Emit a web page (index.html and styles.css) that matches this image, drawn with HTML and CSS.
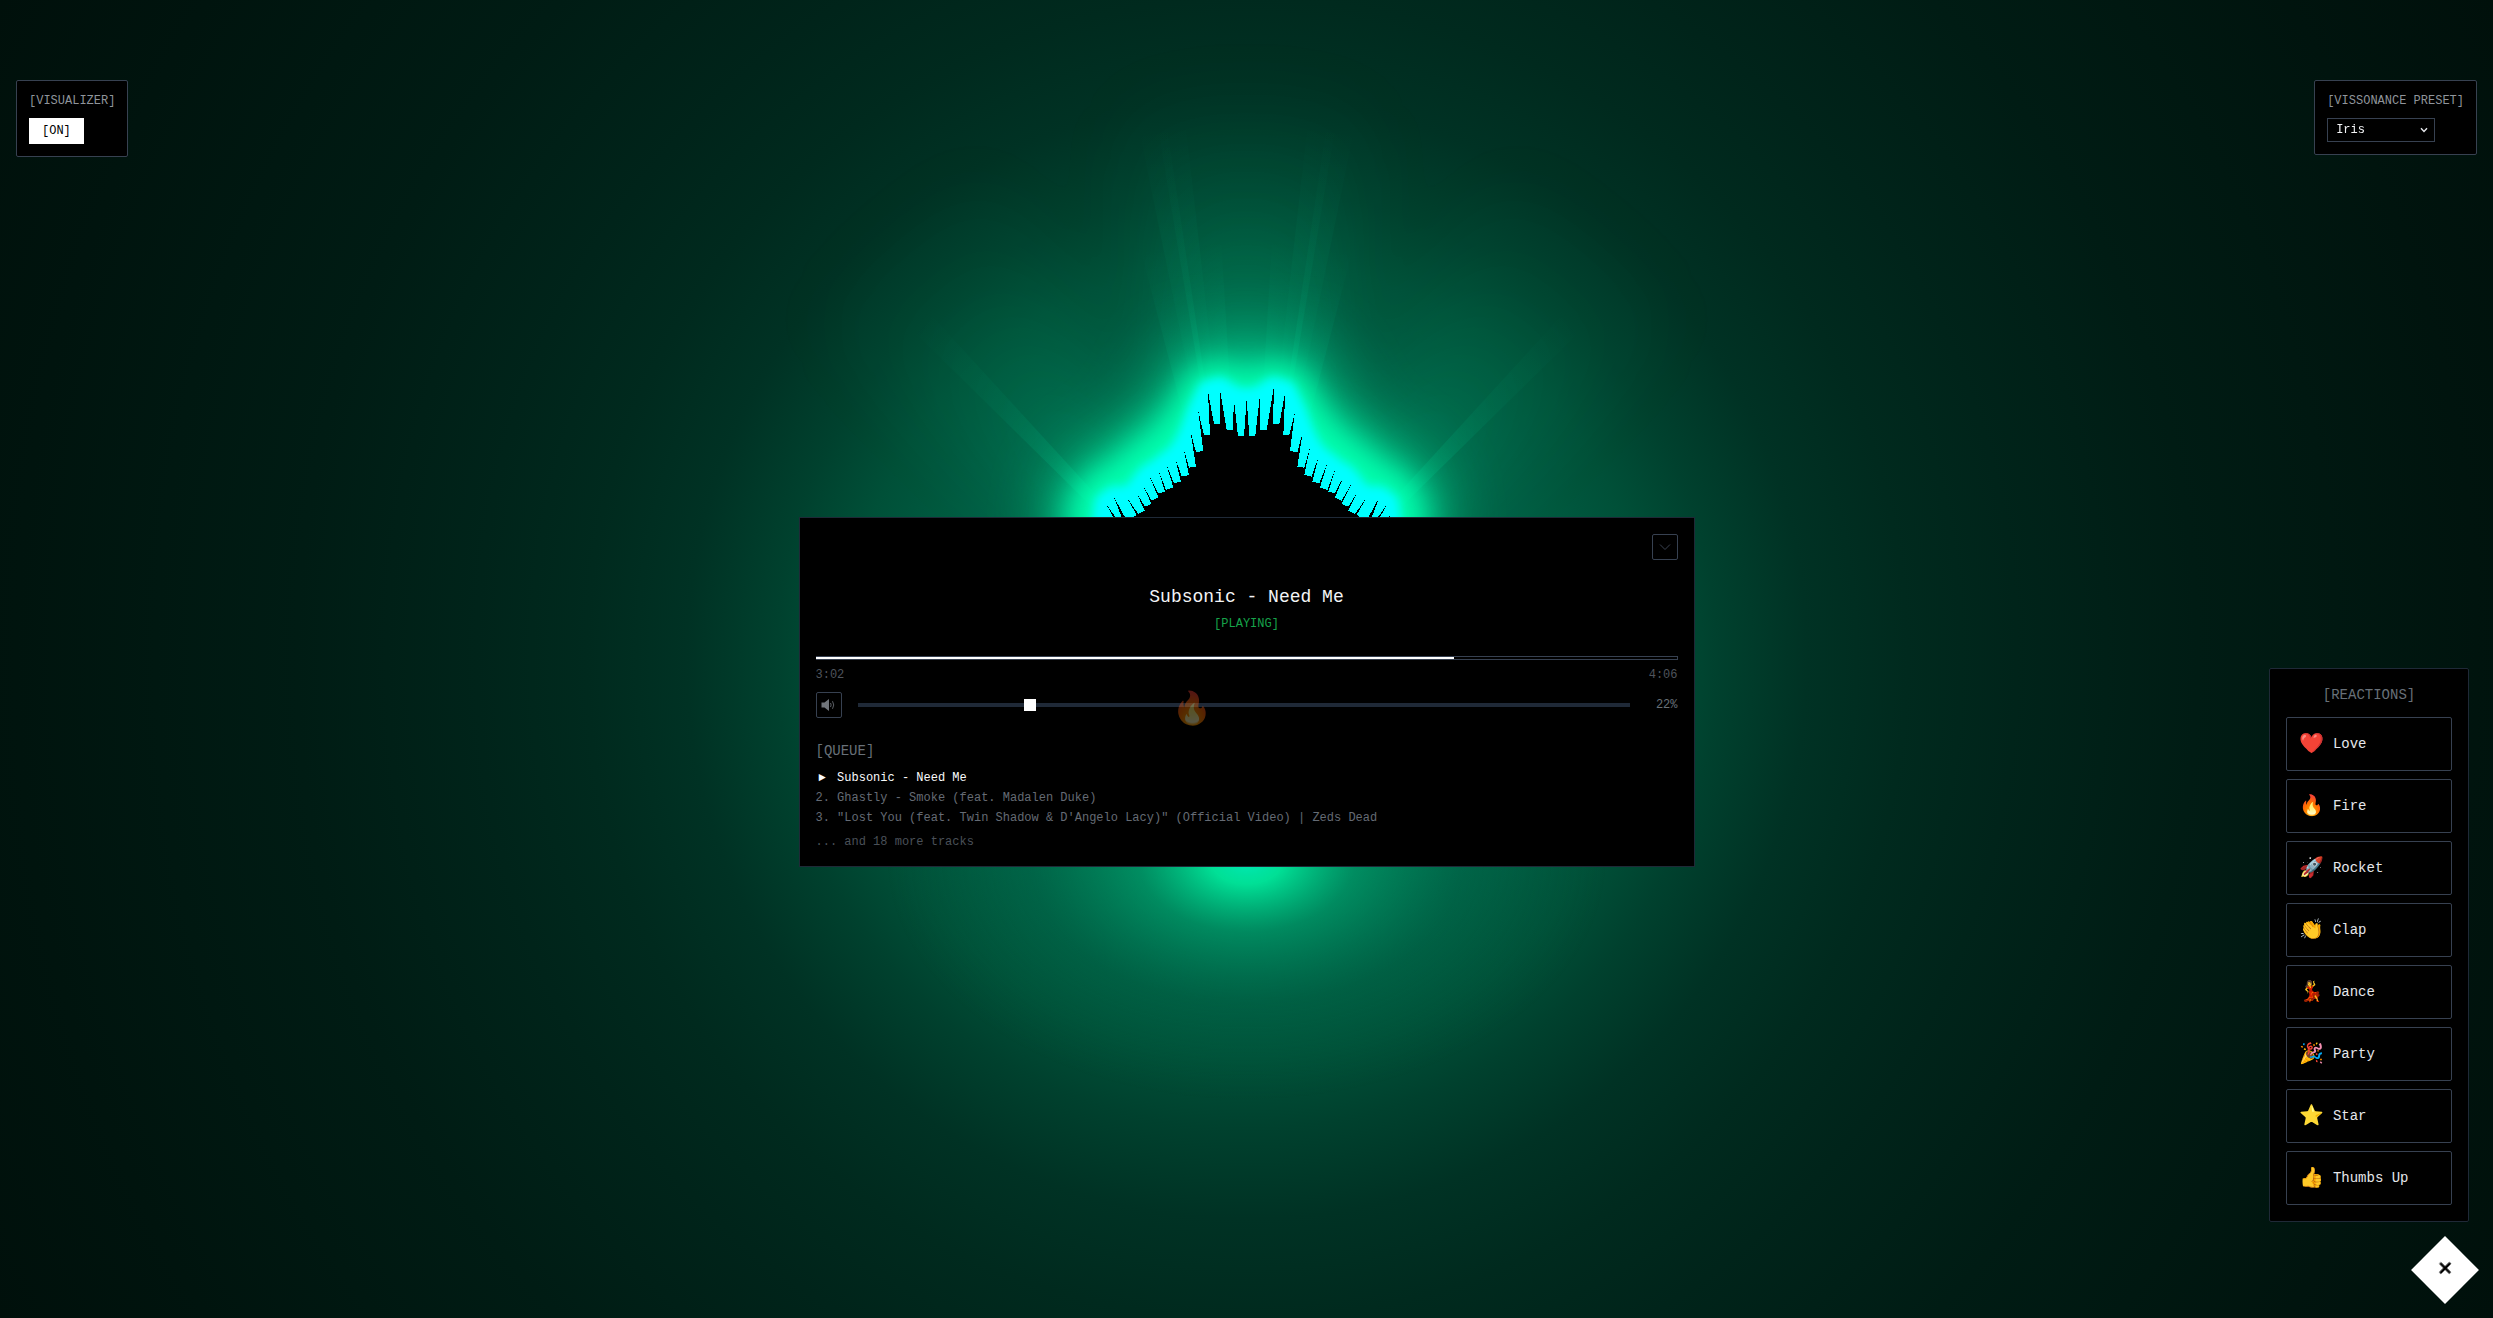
FILE: index.html
```html
<!DOCTYPE html>
<html lang="en">
<head>
<meta charset="utf-8">
<title>Player</title>
<link rel="stylesheet" href="styles.css">
</head>
<body>
<svg class="viz" viewBox="0 0 2493 1318" width="2493" height="1318" aria-hidden="true">
  <defs>
    <radialGradient id="fan" gradientUnits="userSpaceOnUse" cx="1246.67" cy="659" r="580">
      <stop offset="0.4" stop-color="#00ffb0" stop-opacity=".3"/>
      <stop offset="0.7" stop-color="#00ffb0" stop-opacity=".1"/>
      <stop offset="1" stop-color="#00ffb0" stop-opacity="0"/>
    </radialGradient>
    <radialGradient id="rayLong" gradientUnits="userSpaceOnUse" cx="1246.67" cy="659" r="540">
      <stop offset="0.42" stop-color="#00ffb0" stop-opacity=".13"/>
      <stop offset="0.7" stop-color="#00ffb0" stop-opacity=".045"/>
      <stop offset="1" stop-color="#00ffb0" stop-opacity="0"/>
    </radialGradient>
    <radialGradient id="rayMid" gradientUnits="userSpaceOnUse" cx="1246.67" cy="659" r="420">
      <stop offset="0.5" stop-color="#00ffb0" stop-opacity=".12"/>
      <stop offset="1" stop-color="#00ffb0" stop-opacity="0"/>
    </radialGradient>
    <radialGradient id="rayDiag" gradientUnits="userSpaceOnUse" cx="1246.67" cy="659" r="470">
      <stop offset="0.45" stop-color="#00ffb0" stop-opacity=".16"/>
      <stop offset="0.75" stop-color="#00ffb0" stop-opacity=".04"/>
      <stop offset="1" stop-color="#00ffb0" stop-opacity="0"/>
    </radialGradient>
    <radialGradient id="bottomGlow" gradientUnits="userSpaceOnUse" cx="1246.67" cy="860" r="240" gradientTransform="translate(1246.67 860) scale(1.5 1) translate(-1246.67 -860)">
      <stop offset="0" stop-color="#00e8b4" stop-opacity="1"/>
      <stop offset="0.1" stop-color="#00e69a" stop-opacity=".95"/>
      <stop offset="0.3" stop-color="#00b078" stop-opacity=".5"/>
      <stop offset="0.6" stop-color="#007a55" stop-opacity=".22"/>
      <stop offset="1" stop-color="#00704c" stop-opacity="0"/>
    </radialGradient>
    <filter id="b60" filterUnits="userSpaceOnUse" x="300" y="0" width="1900" height="1000"><feGaussianBlur stdDeviation="40"/></filter>
    <filter id="b40" filterUnits="userSpaceOnUse" x="600" y="0" width="1300" height="1000"><feGaussianBlur stdDeviation="34"/></filter>
    <filter id="b22" filterUnits="userSpaceOnUse" x="600" y="0" width="1300" height="1000"><feGaussianBlur stdDeviation="20"/></filter>
    <filter id="b14" filterUnits="userSpaceOnUse" x="600" y="0" width="1300" height="1000"><feGaussianBlur stdDeviation="14"/></filter>
    <filter id="b4" filterUnits="userSpaceOnUse" x="600" y="0" width="1300" height="1000"><feGaussianBlur stdDeviation="5"/></filter>
    <polygon id="fanShape" points="1246.67,659 1115,79 1378,79" fill="url(#fan)"/>
    <polygon id="rayL" points="1246.67,659 1232,89 1261.3,89" fill="url(#rayLong)"/>
    <polygon id="rayM" points="1246.67,659 1235,219 1258.3,219" fill="url(#rayMid)"/>
    <polygon id="rayD" points="1246.67,659 1232,89 1261.3,89" fill="url(#rayDiag)"/>
    <path id="contour" stroke-linejoin="round" d="M0 178 39 172 81 145 116 155 145 215 168 277 190 322 215 352 242 370 265 390 293 405 315 430 332 457 360 472 398 472 423 490 432 560 -432 560 -423 490 -398 472 -360 472 -332 457 -315 430 -293 405 -265 390 -242 370 -215 352 -190 322 -168 277 -145 215 -116 155 -81 145 -39 172Z"/>
    <polygon id="half" points="0,178 8,288 26,288 39,172 40,270 60,270 81,145 80,252 98,252 116,155 110,285 128,285 145,215 130,333 152,337 168,277 152,380 173,383 190,322 173,405 195,410 215,352 197,425 218,430 242,370 220,442 242,450 265,390 245,455 265,460 293,405 265,472 285,482 315,430 285,492 305,500 332,457 305,512 325,522 360,472 330,525 342,532 365,532 398,472 372,540 388,540 423,490 395,540 425,540 428,525 432,540 0,540"/>
  </defs>
  <g filter="url(#b60)">
    <use href="#fanShape"/>
    <g transform="rotate(-40 1246.67 659)"><use href="#fanShape" opacity=".45"/></g>
    <g transform="rotate(40 1246.67 659)"><use href="#fanShape" opacity=".45"/></g>
  </g>
  <g transform="rotate(-10 1246.67 659)"><use href="#rayL"/></g>
  <g transform="rotate(10 1246.67 659)"><use href="#rayL"/></g>
  <g transform="rotate(-8 1246.67 659)"><use href="#rayL"/></g>
  <g transform="rotate(8 1246.67 659)"><use href="#rayL"/></g>
  <g transform="rotate(-5 1246.67 659)"><use href="#rayM"/></g>
  <g transform="rotate(5 1246.67 659)"><use href="#rayM"/></g>
  <g transform="rotate(-13 1246.67 659)"><use href="#rayM"/></g>
  <g transform="rotate(13 1246.67 659)"><use href="#rayM"/></g>
  <g transform="rotate(-44 1246.67 659)"><use href="#rayD"/></g>
  <g transform="rotate(44 1246.67 659)"><use href="#rayD"/></g>
  <ellipse cx="1246.67" cy="860" rx="360" ry="240" fill="url(#bottomGlow)"/>
  <g filter="url(#b40)"><use href="#contour" transform="translate(1246.67 340) scale(.3333)" fill="#00e8a0" stroke="#00e8a0" stroke-width="240" opacity=".8"/></g>
  <g filter="url(#b22)">
    <g transform="translate(1246.67 340) scale(.3333)" fill="none" stroke="#00ffae" stroke-width="220" stroke-linecap="round" opacity=".85">
      <path d="M200 340 430 530"/>
      <path d="M-200 340 -430 530"/>
    </g>
  </g>
  <g filter="url(#b14)"><use href="#contour" transform="translate(1246.67 340) scale(.3333)" fill="#00ffae" stroke="#00ffae" stroke-width="150"/></g>
  <g filter="url(#b4)"><use href="#contour" transform="translate(1246.67 340) scale(.3333)" fill="#00ffff" stroke="#00ffff" stroke-width="66"/></g>
  <g transform="translate(1246.67 340) scale(.3333)" shape-rendering="crispEdges" fill="#000">
    <use href="#half"/>
    <use href="#half" transform="scale(-1 1)"/>
  </g>
</svg>

<div class="stage">
  <main class="player">
    <div class="player-top">
      <button class="icon-btn" type="button" aria-label="Collapse">
        <svg width="12" height="8" viewBox="0 0 12 8"><path d="M1 1.5 6 6.5 11 1.5" fill="none" stroke="#3b4352" stroke-width="1"/></svg>
      </button>
    </div>
    <h1 class="title">Subsonic - Need Me</h1>
    <p class="status">[PLAYING]</p>
    <div class="progress"><div class="progress-fill" style="width:74.2%"></div></div>
    <div class="times"><span>3:02</span><span>4:06</span></div>
    <div class="volume">
      <button class="icon-btn mute" type="button" aria-label="Mute">
        <svg width="15" height="14" viewBox="0 0 15 14"><path d="M0.5 4.5H3.5L8 1V13L3.5 9.5H0.5Z" fill="#71757b"/><path d="M9.5 5Q10.8 7 9.5 9M11.5 3.2Q14 7 11.5 10.8" fill="none" stroke="#5c6066" stroke-width="1"/></svg>
      </button>
      <div class="slider"><div class="thumb" style="left:22.4%"></div></div>
      <span class="pct">22%</span>
    </div>
    <h2 class="queue-title">[QUEUE]</h2>
    <ol class="queue">
      <li class="current"><span class="arrow">►</span>Subsonic - Need Me</li>
      <li>2. Ghastly - Smoke (feat. Madalen Duke)</li>
      <li>3. "Lost You (feat. Twin Shadow &amp; D'Angelo Lacy)" (Official Video) | Zeds Dead</li>
    </ol>
    <p class="more">... and 18 more tracks</p>
  </main>
</div>

<span class="float-emoji">🔥</span>

<aside class="box box-left">
  <div class="box-label">[VISUALIZER]</div>
  <button class="toggle" type="button">[ON]</button>
</aside>

<aside class="box box-right">
  <div class="box-label">[VISSONANCE PRESET]</div>
  <div class="select-wrap">
    <select class="preset"><option>Iris</option><option>Pulse</option><option>Bloom</option></select>
    <svg class="select-chevron" width="8" height="6" viewBox="0 0 8 6"><path d="M1 1.2 4 4.4 7 1.2" fill="none" stroke="#e5e7eb" stroke-width="1.4"/></svg>
  </div>
</aside>

<aside class="reactions">
  <h2 class="reactions-title">[REACTIONS]</h2>
  <div class="reaction-list">
    <button class="reaction" type="button"><span class="emoji">❤️</span><span>Love</span></button>
    <button class="reaction" type="button"><span class="emoji">🔥</span><span>Fire</span></button>
    <button class="reaction" type="button"><span class="emoji">🚀</span><span>Rocket</span></button>
    <button class="reaction" type="button"><span class="emoji">👏</span><span>Clap</span></button>
    <button class="reaction" type="button"><span class="emoji">💃</span><span>Dance</span></button>
    <button class="reaction" type="button"><span class="emoji">🎉</span><span>Party</span></button>
    <button class="reaction" type="button"><span class="emoji">⭐</span><span>Star</span></button>
    <button class="reaction" type="button"><span class="emoji">👍</span><span>Thumbs Up</span></button>
  </div>
</aside>

<button class="diamond" type="button" aria-label="Close"><span class="diamond-x">×</span></button>
</body>
</html>
```
FILE: styles.css
```css
* { box-sizing: border-box; }
html, body { margin: 0; height: 100%; }
body {
  overflow: hidden;
  font-family: "Liberation Mono", "Noto Color Emoji", monospace;
  color: #fff;
  background: radial-gradient(circle 1410px at 1246.67px 659px,
    #006e4c 0, #006e4c 220px, #005f44 300px, #005038 400px, #00412e 470px,
    #003224 560px, #002a1e 660px, #00241a 770px, #001c14 950px, #00140e 1230px, #00100b 100%);
}
button { font-family: inherit; cursor: pointer; }

.viz { position: fixed; left: 0; top: 0; display: block; }

.stage { position: relative; padding-top: 517px; }

.player {
  width: 896px;
  margin: 0 auto;
  height: 350px;
  padding: 16px;
  background: #000;
  border: 1px solid #1f2937;
}
.player-top { display: flex; justify-content: flex-end; }
.icon-btn {
  width: 26px;
  height: 26px;
  padding: 0;
  display: flex;
  align-items: center;
  justify-content: center;
  background: #000;
  border: 1px solid #374151;
  border-radius: 2px;
}

.title {
  margin: 23px 0 0;
  text-align: center;
  font-size: 18px;
  line-height: 28px;
  font-weight: 400;
  color: #f3f4f6;
}
.status {
  margin: 5px 0 0;
  text-align: center;
  font-size: 12px;
  line-height: 16px;
  color: #16a34a;
}
.progress {
  position: relative;
  margin-top: 24px;
  height: 4px;
  border: 1px solid #374151;
  background: #000;
}
.progress-fill { position: absolute; left: -1px; top: 0; height: 2px; background: #fff; }
.times {
  display: flex;
  justify-content: space-between;
  margin-top: 7px;
  font-size: 12px;
  line-height: 16px;
  color: #4f545c;
}
.volume { display: flex; align-items: center; gap: 16px; margin-top: 9px; }
.slider { position: relative; flex: 1; height: 4px; background: #1f2937; }
.thumb {
  position: absolute;
  top: -4px;
  width: 12px;
  height: 12px;
  margin-left: -6px;
  background: #fff;
}
.pct { width: 32px; text-align: right; font-size: 12px; line-height: 16px; color: #687078; }

.queue-title {
  margin: 23px 0 9px;
  font-size: 14px;
  line-height: 20px;
  font-weight: 400;
  color: #687078;
}
.queue {
  list-style: none;
  margin: 0;
  padding: 0;
  display: flex;
  flex-direction: column;
  gap: 4px;
  font-size: 12px;
  line-height: 16px;
  color: #656b74;
}
.current { color: #f9fafb; }
.arrow { display: inline-block; width: 21.6px; padding-left: 3px; }
.more { margin: 8px 0 0; font-size: 12px; line-height: 16px; color: #4a5058; }

.float-emoji {
  position: absolute;
  left: 1172px;
  top: 692px;
  font-size: 32px;
  line-height: 37px;
  opacity: .34;
}

.box {
  position: absolute;
  top: 80px;
  padding: 12px;
  background: #000;
  border: 1px solid #374151;
  border-radius: 2px;
}
.box-left { left: 16px; }
.box-right { right: 16px; }
.box-label { margin-bottom: 9px; font-size: 12px; line-height: 16px; color: #8f949b; }
.toggle {
  display: block;
  padding: 4px 12px;
  background: #fff;
  border: 1px solid #fff;
  color: #000;
  font-size: 12px;
  line-height: 16px;
}
.select-wrap { position: relative; width: 108px; }
.preset {
  display: block;
  width: 108px;
  height: 24px;
  padding: 0 8px;
  appearance: none;
  background: #000;
  border: 1px solid #374151;
  border-radius: 0;
  color: #f3f4f6;
  font-family: inherit;
  font-size: 12px;
}
.select-chevron { position: absolute; right: 7px; top: 9px; pointer-events: none; }

.reactions {
  position: absolute;
  right: 24px;
  bottom: 96px;
  width: 200px;
  padding: 16px;
  background: #000;
  border: 1px solid #1f2937;
  border-radius: 2px;
}
.reactions-title {
  margin: 0 0 12px;
  text-align: center;
  font-size: 14px;
  line-height: 20px;
  font-weight: 400;
  color: #687078;
}
.reaction-list { display: flex; flex-direction: column; gap: 8px; }
.reaction {
  display: flex;
  align-items: center;
  gap: 9px;
  height: 54px;
  padding: 12px;
  background: #000;
  border: 1px solid #374151;
  border-radius: 2px;
  color: #e5e7eb;
  font-size: 14px;
  line-height: 20px;
  text-align: left;
}
.emoji { margin-top: 2px; font-size: 20px; line-height: 28px; }

.diamond {
  position: absolute;
  right: 24px;
  bottom: 24px;
  width: 48px;
  height: 48px;
  padding: 0;
  display: flex;
  align-items: center;
  justify-content: center;
  background: #fff;
  border: 0;
  transform: rotate(45deg);
}
.diamond-x {
  display: block;
  transform: rotate(-45deg);
  color: #000;
  font-size: 24px;
  line-height: 1;
  font-weight: 700;
}
```
